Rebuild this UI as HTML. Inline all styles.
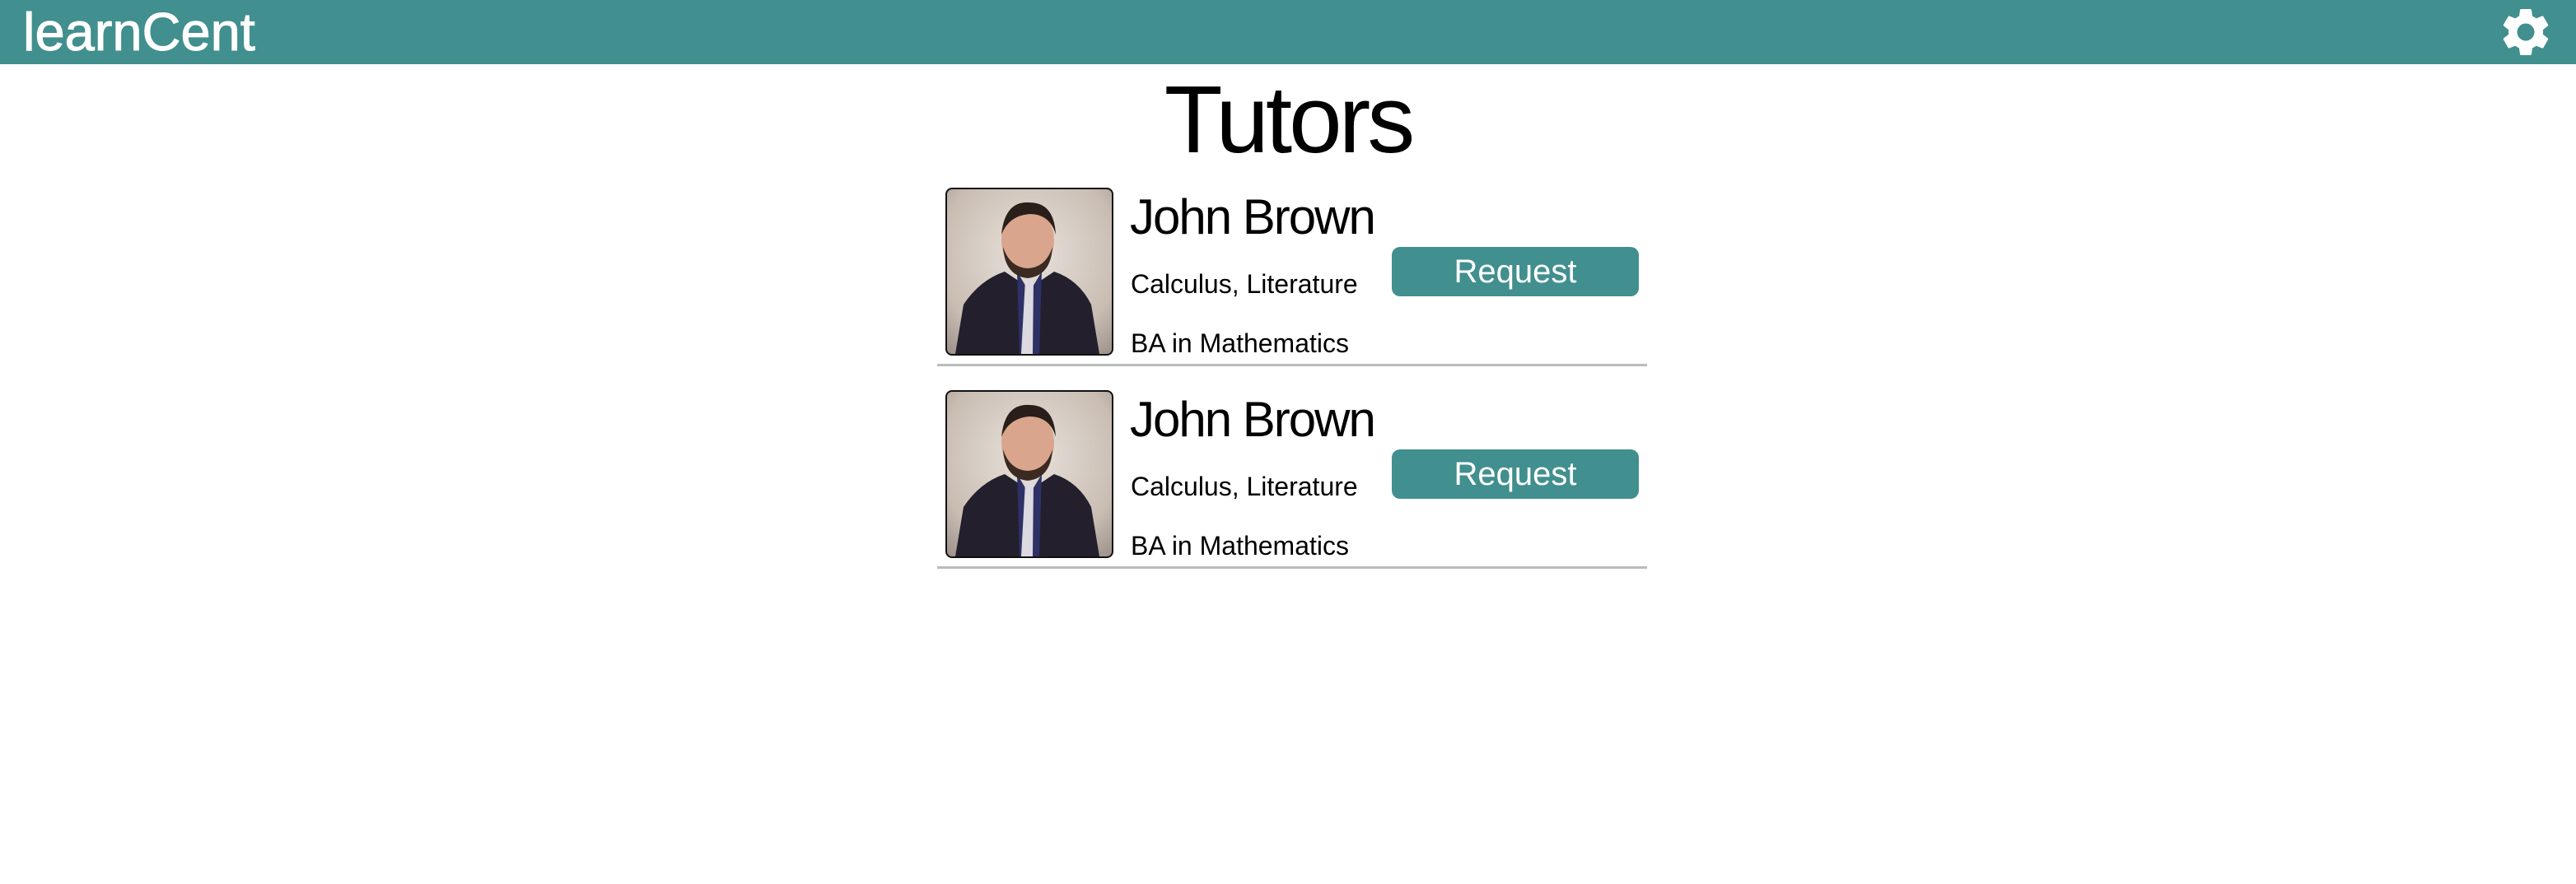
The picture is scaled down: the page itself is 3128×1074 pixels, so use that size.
<!DOCTYPE html>
<html><head><style>
body{margin:0;width:3128px;height:1074px;background:#fff;font-family:"Liberation Sans",sans-serif;position:relative;overflow:hidden}
.hdr{position:absolute;left:0;top:0;width:3128px;height:78px;background:#418f8e}
.logo{position:absolute;left:28px;top:4px;font-size:65px;color:#fff;line-height:70px;-webkit-text-stroke:1px #fff}
.title{position:absolute;left:0;width:3128px;top:80px;text-align:center;font-size:116px;font-weight:300;line-height:130px;color:#000;letter-spacing:-4px}
.row{position:absolute;left:1140px;width:862px;height:246px}
.photo{position:absolute;left:8px;top:0;width:200px;height:200px;border:2px solid #111;border-radius:8px;overflow:hidden;background:radial-gradient(circle at 50% 40%,#e9e3dc,#c9bdb3 70%,#9b918a)}
.name{position:absolute;left:232px;top:0px;font-size:60px;line-height:72px;color:#000;letter-spacing:-2px}
.sub{position:absolute;left:233px;font-size:32px;color:#000}
.btn{position:absolute;left:550px;top:72px;width:300px;height:60px;background:#418f8e;border-radius:10px;color:#fff;font-size:40px;text-align:center;line-height:60px}
.line{position:absolute;left:-2px;top:214px;width:862px;height:3px;background:#bbb}
</style></head><body>
<div class="hdr"><div class="logo">learnCent</div>
<svg style="position:absolute;left:3032px;top:4px" width="70" height="70" viewBox="0 0 24 24"><path fill="#fff" d="M19.14 12.94c.04-.3.06-.61.06-.94s-.02-.64-.07-.94l2.03-1.580a.49.49 0 0 0 .12-.61l-1.920-3.32a.49.49 0 0 0-.59-.22l-2.390.96c-.5-.38-1.030-.7-1.620-.94l-.36-2.54a.48.48 0 0 0-.48-.41h-3.840c-.24 0-.43.17-.47.41l-.36 2.540c-.59.24-1.130.57-1.620.94l-2.390-.96a.48.48 0 0 0-.59.22L2.740 8.870c-.12.21-.08.47.12.61l2.030 1.580c-.05.3-.09.63-.09.94s.02.64.07.94l-2.030 1.580a.49.49 0 0 0-.12.61l1.920 3.320c.12.22.37.29.59.22l2.390-.96c.5.38 1.030.7 1.620.94l.36 2.540c.05.24.24.41.48.41h3.840c.24 0 .44-.17.47-.41l.36-2.540c.59-.24 1.130-.56 1.620-.94l2.390.96c.22.08.47 0 .59-.22l1.920-3.320c.12-.22.07-.47-.12-.61l-2.010-1.580zM12 15.6A3.6 3.6 0 1 1 12 8.4a3.6 3.6 0 0 1 0 7.2z"/></svg>
</div>
<div class="title">Tutors</div>

<div class="row" style="top:228px">
<div class="photo"><svg width="200" height="200" viewBox="0 0 200 200"><path d="M10 200 L20 140 Q40 110 70 100 L100 120 L130 100 Q160 110 175 140 L185 200Z" fill="#231f2c"/><path d="M85 100 L100 125 L115 100 L112 200 L88 200Z" fill="#2d3166"/><path d="M95 110 L105 110 L104 200 L90 200Z" fill="#ddd9e0"/><ellipse cx="98" cy="62" rx="32" ry="40" fill="#d9a58c"/><path d="M66 55 Q70 14 100 16 Q130 16 132 55 Q125 30 100 30 Q75 32 66 55Z" fill="#2a1e1a"/><path d="M68 70 Q70 105 98 108 Q126 105 128 70 Q120 95 98 96 Q76 95 68 70Z" fill="#3a2a22"/></svg></div>
<div class="name">John Brown</div>
<div class="sub" style="top:99px">Calculus, Literature</div>
<div class="sub" style="top:171px">BA in Mathematics</div>
<div class="btn">Request</div>
<div class="line"></div>
</div>

<div class="row" style="top:474px">
<div class="photo"><svg width="200" height="200" viewBox="0 0 200 200"><path d="M10 200 L20 140 Q40 110 70 100 L100 120 L130 100 Q160 110 175 140 L185 200Z" fill="#231f2c"/><path d="M85 100 L100 125 L115 100 L112 200 L88 200Z" fill="#2d3166"/><path d="M95 110 L105 110 L104 200 L90 200Z" fill="#ddd9e0"/><ellipse cx="98" cy="62" rx="32" ry="40" fill="#d9a58c"/><path d="M66 55 Q70 14 100 16 Q130 16 132 55 Q125 30 100 30 Q75 32 66 55Z" fill="#2a1e1a"/><path d="M68 70 Q70 105 98 108 Q126 105 128 70 Q120 95 98 96 Q76 95 68 70Z" fill="#3a2a22"/></svg></div>
<div class="name">John Brown</div>
<div class="sub" style="top:99px">Calculus, Literature</div>
<div class="sub" style="top:171px">BA in Mathematics</div>
<div class="btn">Request</div>
<div class="line"></div>
</div>
</body></html>
